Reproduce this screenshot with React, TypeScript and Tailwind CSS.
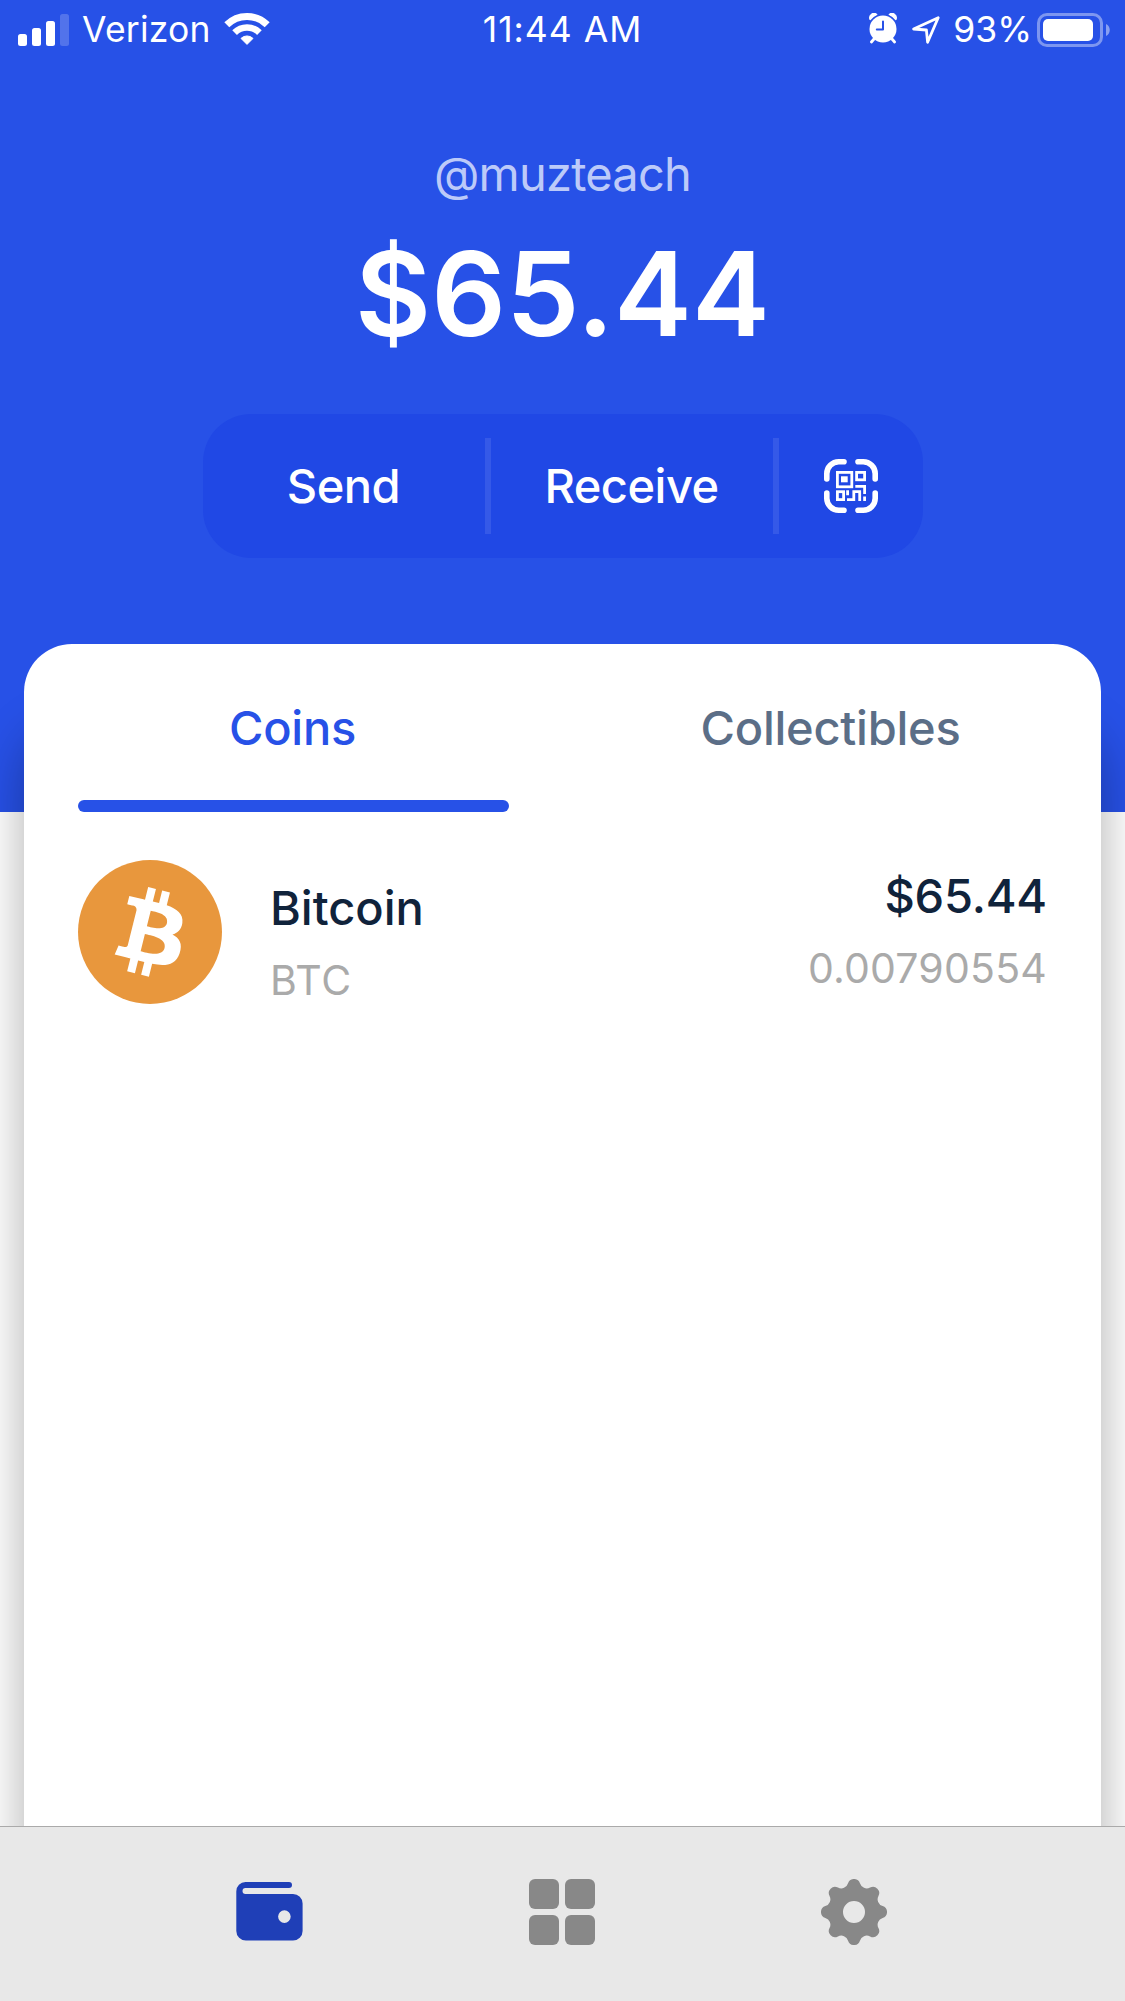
import type { ReactNode } from 'react';

const coins = [
  { symbol: 'BTC', name: 'Bitcoin', fiat: '$65.44', amount: '0.00790554' },
];

function SignalIcon() {
  return (
    <svg width="51" height="32" viewBox="0 0 51 32" fill="#fff">
      <rect x="0" y="20" width="9" height="12" rx="2.5" />
      <rect x="14" y="14" width="9" height="18" rx="2.5" />
      <rect x="28" y="7" width="9" height="25" rx="2.5" />
      <rect x="42" y="0" width="9" height="32" rx="2.5" opacity="0.2" />
    </svg>
  );
}

function WifiIcon() {
  return (
    <svg width="46" height="34" viewBox="0 0 46 34" fill="none" stroke="#fff">
      <path d="M2.8 12.8a28.6 28.6 0 0 1 40.4 0" strokeWidth="7" />
      <path d="M10.6 20.6a17.5 17.5 0 0 1 24.8 0" strokeWidth="6.6" />
      <path d="M23 32.4l-6-6a8.6 8.6 0 0 1 12 0z" fill="#fff" strokeWidth="1" strokeLinejoin="round" />
    </svg>
  );
}

function AlarmIcon() {
  return (
    <svg width="28" height="31" viewBox="0 0 28 31" fill="none">
      <circle cx="14" cy="16" r="13.5" fill="#fff" />
      <path d="M.9 6.2A4.4 4.4 0 0 1 7.8 1.4 17 17 0 0 0 1.2 6.6zM27.1 6.2A4.4 4.4 0 0 0 20.2 1.4a17 17 0 0 1 6.6 5.2z" fill="#fff" stroke="#fff" strokeWidth="1.2" strokeLinejoin="round" />
      <path d="M5 26l-2.6 3M23 26l2.6 3" stroke="#fff" strokeWidth="2.8" strokeLinecap="round" />
      <path d="M14 8.4v8.2H7.8" stroke="#2751e7" strokeWidth="2" strokeLinecap="round" strokeLinejoin="round" />
    </svg>
  );
}

function LocationIcon() {
  return (
    <svg width="28" height="28" viewBox="0 0 28 28" fill="none" stroke="#fff" strokeWidth="2.8" strokeLinejoin="round">
      <path d="M1.6 13L26.2 1.8 15.6 26.2 14.4 14z" />
    </svg>
  );
}

function BatteryIcon() {
  return (
    <svg width="74" height="34" viewBox="0 0 74 34" fill="none">
      <rect x="1.5" y="1.5" width="63" height="31" rx="8.5" stroke="#fff" strokeOpacity="0.4" strokeWidth="3" />
      <rect x="6" y="6" width="50" height="22" rx="5" fill="#fff" />
      <path d="M69 11c5 2 5 10 0 12z" fill="#fff" fillOpacity="0.45" />
    </svg>
  );
}

function QrScanIcon() {
  return (
    <svg width="54" height="54" viewBox="0 0 54 54" fill="none" stroke="#fff">
      <path
        d="M2.8 20v-5.2a12 12 0 0 1 12-12H20M34 2.8h5.2a12 12 0 0 1 12 12V20M51.2 34v5.2a12 12 0 0 1-12 12H34M20 51.2h-5.2a12 12 0 0 1-12-12V34"
        strokeWidth="5.6"
        strokeLinecap="round"
      />
      <g strokeWidth="2.8">
        <rect x="13.4" y="13.4" width="14.4" height="14.4" />
        <rect x="32.6" y="13.4" width="8" height="7.4" />
        <rect x="13.4" y="32.7" width="6.2" height="7.9" />
        <path d="M31.3 27.4h9.3V35M40.6 37.4V42M23.6 31.3v5M23 40.6h6.8v-7.9h5.9V42" />
      </g>
      <rect x="17" y="17.3" width="6.7" height="6" fill="#fff" stroke="none" />
    </svg>
  );
}

function BitcoinIcon() {
  return (
    <svg width="144" height="144" viewBox="0 0 32 32">
      <circle cx="16" cy="16" r="16" fill="#e8973d" />
      <path
        fill="#fff"
        d="M23.189 14.02c.314-2.096-1.283-3.223-3.465-3.975l.708-2.84-1.728-.43-.69 2.765c-.454-.114-.92-.22-1.385-.326l.695-2.783L15.596 6l-.708 2.839c-.376-.086-.746-.17-1.104-.26l.002-.009-2.384-.595-.46 1.846s1.283.294 1.256.312c.7.175.826.638.805 1.006l-.806 3.235c.048.012.11.03.18.057l-.183-.045-1.13 4.532c-.086.212-.303.531-.793.41.018.025-1.256-.313-1.256-.313l-.858 1.978 2.25.561c.418.105.828.215 1.231.318l-.715 2.872 1.727.43.708-2.84c.472.127.93.245 1.378.357l-.706 2.828 1.728.43.715-2.866c2.948.558 5.164.333 6.097-2.333.752-2.146-.037-3.385-1.588-4.192 1.13-.26 1.98-1.003 2.207-2.538zm-3.95 5.538c-.533 2.147-4.148.986-5.32.695l.95-3.805c1.172.293 4.929.872 4.37 3.11zm.535-5.569c-.487 1.953-3.495.96-4.47.717l.86-3.45c.975.243 4.118.696 3.61 2.733z"
      />
    </svg>
  );
}

function WalletIcon() {
  return (
    <svg width="67" height="59" viewBox="0 0 67 59" fill="#1f3fb7">
      <path
        fillRule="evenodd"
        d="M9.5 0H53a3 3 0 0 1 0 6H9.5a3 3 0 0 0 0 6H57a9.6 9.6 0 0 1 9.6 9.6V49a9.6 9.6 0 0 1-9.6 9.6H9.9A9.6 9.6 0 0 1 .3 49V9.5A9.4 9.4 0 0 1 9.5 0zM48.4 28.3a6.3 6.3 0 1 0 0 12.6 6.3 6.3 0 0 0 0-12.6z"
      />
    </svg>
  );
}

function GridIcon() {
  return (
    <svg width="66" height="66" viewBox="0 0 66 66" fill="#888">
      <rect width="30" height="30" rx="6" />
      <rect x="36" width="30" height="30" rx="6" />
      <rect y="36" width="30" height="30" rx="6" />
      <rect x="36" y="36" width="30" height="30" rx="6" />
    </svg>
  );
}

// eight round teeth joined by concave arcs
function gearPath() {
  const point = (deg: number) => {
    const a = (deg * Math.PI) / 180;
    return `${(33 + 29.25 * Math.cos(a)).toFixed(2)} ${(33 + 29.25 * Math.sin(a)).toFixed(2)}`;
  };
  let d = `M${point(-11.7)}`;
  for (let k = 0; k < 8; k++) {
    d += `A6.2 6.2 0 0 1 ${point(k * 45 + 11.7)}`;
    d += `A7.1 7.1 0 0 0 ${point(k * 45 + 33.3)}`;
  }
  return d + 'ZM33 22a11 11 0 1 0 0 22 11 11 0 0 0 0-22Z';
}

function GearIcon() {
  return (
    <svg width="66" height="66" viewBox="0 0 66 66" fill="#888">
      <path fillRule="evenodd" d={gearPath()} />
    </svg>
  );
}

function StatusBar() {
  return (
    <div className="grid grid-cols-3 h-[59px] text-[35.5px] leading-[59px]">
      <div className="flex items-center pl-[18px]">
        <SignalIcon />
        <span className="ml-[13px] tracking-[0.2px]">Verizon</span>
        <span className="ml-[13px] pb-[1px]"><WifiIcon /></span>
      </div>
      <div className="text-center tracking-[1px]">11:44 AM</div>
      <div className="flex items-center justify-end pr-[14px]">
        <span className="pb-[2px]"><AlarmIcon /></span>
        <span className="ml-[15px]"><LocationIcon /></span>
        <span className="ml-[13px] mr-[5px]">93%</span>
        <BatteryIcon />
      </div>
    </div>
  );
}

function Tab({ label, active }: { label: string; active?: boolean }) {
  return (
    <button className={`flex-1 flex flex-col items-center ${active ? 'text-[#2751e7]' : 'text-[#5b6e87]'}`}>
      <span className="h-[156px] pt-[54px] pr-[2px] text-[47px] leading-[60px] font-medium tracking-[-0.25px]">{label}</span>
      <span className={`w-full h-3 rounded-md ${active ? 'bg-[#2751e7]' : ''}`} />
    </button>
  );
}

function NavItem({ children }: { children: ReactNode }) {
  return <button className="w-[292px] flex items-center justify-center">{children}</button>;
}

export default function App() {
  return (
    <div className="w-[1125px] h-[2001px] flex flex-col overflow-hidden bg-white font-['Inter',sans-serif]">
      {/* Balance header */}
      <header className="h-[812px] shrink-0 bg-[#2751e7] text-white">
        <StatusBar />
        <div className="flex flex-col items-center">
          <p className="mt-[85px] text-[47px] leading-[60px] tracking-[-0.8px] text-[#bccaf9]">@muzteach</p>
          <p className="mt-[20px] text-[117px] leading-[140px] font-semibold">$65.44</p>
          <div className="mt-[50px] w-[720px] h-[144px] rounded-[48px] bg-[#2048e5] flex items-center text-[47px] font-medium tracking-[-0.5px]">
            <button className="w-[282px] text-center">Send</button>
            <span className="w-1.5 h-24 bg-[#3559e8]" />
            <button className="w-[282px] text-center">Receive</button>
            <span className="w-1.5 h-24 bg-[#3559e8]" />
            <button className="flex-1 flex justify-center"><QrScanIcon /></button>
          </div>
        </div>
      </header>

      {/* Assets card, pulled up over the header */}
      <main className="-mt-[168px] mx-6 flex-1 rounded-t-[48px] bg-white px-[54px] shadow-[0_86px_50px_rgba(0,0,0,0.32)]">
        <div className="flex gap-[107px]">
          <Tab label="Coins" active />
          <Tab label="Collectibles" />
        </div>
        {coins.map(coin => (
          <div key={coin.symbol} className="mt-12 h-[144px] flex">
            <BitcoinIcon />
            <div className="ml-12 flex-1 pt-[18px]">
              <p className="text-[47px] leading-[60px] font-medium text-[#10233b]">{coin.name}</p>
              <p className="mt-3 text-[41px] leading-[60px] tracking-[0.8px] text-[#aaa]">{coin.symbol}</p>
            </div>
            <div className="text-right pt-[6px]">
              <p className="text-[47px] leading-[60px] font-medium tracking-[-0.2px] text-[#10233b]">{coin.fiat}</p>
              <p className="mt-3 text-[41px] leading-[60px] tracking-[0.2px] text-[#aaa]">{coin.amount}</p>
            </div>
          </div>
        ))}
      </main>

      {/* Bottom navigation */}
      <nav className="relative h-[175px] shrink-0 flex justify-center pr-[2px] pb-[4px] bg-[#e8e8e8] border-t border-[#aaa]">
        <NavItem><span className="pb-[2px]"><WalletIcon /></span></NavItem>
        <NavItem><GridIcon /></NavItem>
        <NavItem><GearIcon /></NavItem>
      </nav>
    </div>
  );
}
